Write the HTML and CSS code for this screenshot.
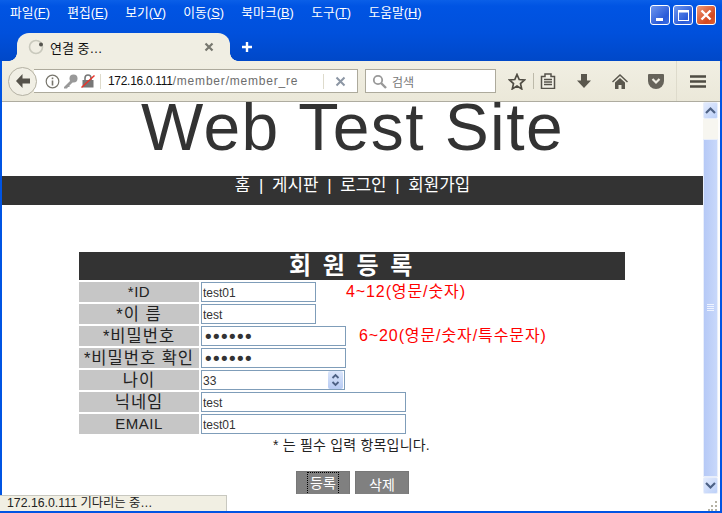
FILE: index.html
```html
<!DOCTYPE html>
<html lang="ko">
<head>
<meta charset="utf-8">
<title>연결 중…</title>
<link rel="stylesheet" href="styles.css">
</head>
<body>
<div class="window">
  <header class="titlebar">
    <nav class="menu">
      <span>파일(<u>F</u>)</span><span>편집(<u>E</u>)</span><span>보기(<u>V</u>)</span><span>이동(<u>S</u>)</span><span>북마크(<u>B</u>)</span><span>도구(<u>T</u>)</span><span>도움말(<u>H</u>)</span>
    </nav>
    <div class="winbtns">
      <div class="winbtn"><svg width="18" height="18" viewBox="0 0 18 18"><rect x="5" y="12" width="7" height="3" fill="#fff"/></svg></div>
      <div class="winbtn"><svg width="18" height="18" viewBox="0 0 18 18"><rect x="4.500" y="4.500" width="10" height="10" fill="none" stroke="#fff"/><rect x="4" y="4" width="11" height="2.500" fill="#fff"/></svg></div>
      <div class="winbtn close"><svg width="18" height="18" viewBox="0 0 18 18"><path d="M4.500 4.500l9 9M13.500 4.500l-9 9" stroke="#fff" stroke-width="2.400"/></svg></div>
    </div>
  </header>
  <div class="tabbar">
    <div class="tab">
      <svg class="spinner" width="16" height="16" viewBox="0 0 16 16"><circle cx="8" cy="8" r="6.500" fill="none" stroke="#c9c9bd" stroke-width="1.600"/><circle cx="13" cy="5.500" r="2" fill="#55554f"/></svg>
      <span class="tabtitle">연결 중…</span>
      <svg class="tabclose" width="10" height="10" viewBox="0 0 10 10"><path d="M1.500 1.500l7 7M8.500 1.500l-7 7" stroke="#77776f" stroke-width="2.200"/></svg>
    </div>
    <svg class="newtab" width="12" height="12" viewBox="0 0 12 12"><path d="M6 1v10M1 6h10" stroke="#fff" stroke-width="2.400"/></svg>
  </div>
  <div class="toolbar">
    <div class="back"><svg width="18" height="16" viewBox="0 0 18 16"><path d="M8.500 1L2 8l6.500 7V10.500H16v-5H8.500z" fill="#55524a"/></svg></div>
    <div class="urlbar">
      <svg class="ico-info" width="15" height="15" viewBox="0 0 15 15"><circle cx="7.500" cy="7.500" r="6.300" fill="none" stroke="#77756c" stroke-width="1.200"/><rect x="6.700" y="6.500" width="1.600" height="5" fill="#77756c"/><rect x="6.700" y="3.500" width="1.600" height="1.700" fill="#77756c"/></svg>
      <svg class="ico-key" width="15" height="15" viewBox="0 0 15 15"><circle cx="10.500" cy="4.500" r="4" fill="#999"/><path d="M8 6L1 13v1.500h3l1-1.500h1.500V11.500L10 8z" fill="#999"/></svg>
      <svg class="ico-lock" width="14" height="14" viewBox="0 0 14 14"><rect x="1.500" y="6" width="11" height="7.500" fill="#777"/><path d="M4 6.500V4a3 3 0 0 1 6 0v2.500" fill="none" stroke="#777" stroke-width="1.600"/><path d="M0.500 13.500L13.500 1.500" stroke="#e8352b" stroke-width="1.500"/></svg>
      <div class="sep"></div>
      <div class="url"><span class="host">172.16.0.111</span><span class="path">/member/member_re</span></div>
      <div class="sep right"></div>
      <svg class="urlclose" width="11" height="11" viewBox="0 0 11 11"><path d="M1.500 1.500l8 8M9.500 1.500l-8 8" stroke="#8c96a4" stroke-width="2"/></svg>
    </div>
    <div class="search">
      <svg width="15" height="15" viewBox="0 0 15 15"><circle cx="6" cy="6" r="4.200" fill="none" stroke="#999" stroke-width="1.800"/><path d="M9 9l5 5" stroke="#999" stroke-width="2.400"/></svg>
      <span>검색</span>
    </div>
    <div class="tools">
      <svg class="t-star" width="18" height="17" viewBox="0 0 18 17"><path d="M9 1.500l2.200 5 5.300.5-4 3.600 1.200 5.300L9 13.100 4.300 15.900l1.200-5.300-4-3.600 5.300-.5z" fill="none" stroke="#4f4c43" stroke-width="1.700"/></svg>
      <div class="tsep"></div>
      <svg class="t-clip" width="16" height="16" viewBox="0 0 16 16"><path d="M1.500 3.500h3.500V1h6v2.500h3.500v12H1.500z" fill="#f2f0e6" stroke="#55524a" stroke-width="1.500"/><path d="M4 6.500h8M4 9h8M4 11.500h8" stroke="#55524a" stroke-width="1.400"/></svg>
      <svg class="t-down" width="16" height="16" viewBox="0 0 16 16"><path d="M5 1h6v6.500h4L8 15 1 7.500h4z" fill="#5a574d"/></svg>
      <svg class="t-home" width="16" height="15" viewBox="0 0 16 15"><path d="M8 0L0 7.500l1 1L8 2l7 6.500 1-1z" fill="#5a574d"/><path d="M8 4L3 8.500V15h3.500v-4h3v4H13V8.500z" fill="#5a574d"/></svg>
      <svg class="t-pocket" width="16" height="15" viewBox="0 0 16 15"><path d="M1 0h14a1 1 0 0 1 1 1v6a8 8 0 0 1-16 0V1a1 1 0 0 1 1-1z" fill="#66635a"/><path d="M4.500 5L8 8.500 11.500 5" fill="none" stroke="#efede2" stroke-width="2.200"/></svg>
      <div class="tsep last"></div>
      <svg class="t-menu" width="16" height="13" viewBox="0 0 16 13"><path d="M0 1.500h16M0 6.500h16M0 11.500h16" stroke="#4f4c43" stroke-width="2.400"/></svg>
    </div>
  </div>
  <div class="viewport">
    <main class="page">
      <h1 class="site-title">Web Test Site</h1>
      <nav class="site-nav">홈 &nbsp;|&nbsp; 게시판 &nbsp;|&nbsp; 로그인 &nbsp;|&nbsp; 회원가입</nav>
      <form class="regform">
        <div class="formhead">회 원 등 록</div>
        <div class="row"><label class="lat">*ID</label><input class="w-id" value="test01"><span class="hint h1">4~12(영문/숫자)</span></div>
        <div class="row"><label>*이 름</label><input class="w-id" value="test"></div>
        <div class="row"><label>*비밀번호</label><input class="w-pw" type="password" value="123456"><span class="hint h2">6~20(영문/숫자/특수문자)</span></div>
        <div class="row"><label>*비밀번호 확인</label><input class="w-pw" type="password" value="123456"></div>
        <div class="row"><label>나이</label>
          <div class="numbox"><span>33</span>
            <div class="spin"><svg width="15" height="18" viewBox="0 0 15 18"><path d="M4.500 7L7.500 4l3 3" fill="none" stroke="#4d6185" stroke-width="1.800"/><path d="M4.500 11l3 3 3-3" fill="none" stroke="#4d6185" stroke-width="1.800"/></svg></div>
          </div>
        </div>
        <div class="row"><label>닉네임</label><input class="w-long" value="test"></div>
        <div class="row"><label class="lat">EMAIL</label><input class="w-long" value="test01"></div>
        <p class="note">* 는 필수 입력 항목입니다.</p>
        <div class="actions">
          <button type="button" class="btn focus"><span>등록</span></button>
          <button type="button" class="btn"><span>삭제</span></button>
        </div>
      </form>
    </main>
    <aside class="scrollbar">
      <div class="sb-btn"><svg width="13" height="9" viewBox="0 0 13 9"><path d="M2 7l4.500-4.500L11 7" fill="none" stroke="#4d6185" stroke-width="2.200"/></svg></div>
      <div class="sb-track">
        <div class="sb-thumb"><svg width="7" height="8" viewBox="0 0 7 8"><path d="M0 .5h7M0 2.500h7M0 4.500h7M0 6.500h7" stroke="#eef3ff"/></svg></div>
      </div>
      <div class="sb-btn"><svg width="13" height="9" viewBox="0 0 13 9"><path d="M2 2l4.500 4.500L11 2" fill="none" stroke="#4d6185" stroke-width="2.200"/></svg></div>
    </aside>
  </div>
  <footer class="statusbar">
    <div class="status">172.16.0.111 기다리는 중…</div>
    <svg class="grip" width="10" height="10" viewBox="0 0 10 10"><path d="M7 0h2v2H7zM7 4h2v2H7zM3 4h2v2H3zM7 8h2v2H7zM3 8h2v2H3zM0 8h2v2H0z" fill="#b5b2a4"/></svg>
  </footer>
</div>
</body>
</html>
```
FILE: styles.css
```css
* { box-sizing: border-box; }
html, body { margin: 0; padding: 0; height: 100%; overflow: hidden; }
body { font-family: "Liberation Sans", "Noto Sans CJK KR", sans-serif; }
.window {
  width: 722px; height: 513px; display: flex; flex-direction: column;
  background: #0054e3; padding: 0 2px 2px 2px;
}
.titlebar {
  height: 33px; margin: 0 -2px; padding: 5px 6px 0 10px;
  display: flex; justify-content: space-between; align-items: flex-start;
  background: linear-gradient(#0a5fe8 0, #0054e3 6px, #0050dc 100%);
}
.menu { display: flex; gap: 17.400px; color: #fff; font-size: 12.800px; line-height: 15px; }
.menu span { white-space: nowrap; }
.winbtns { display: flex; gap: 3px; }
.winbtn {
  width: 20px; height: 20px; border: 1px solid #fff; border-radius: 3px;
  background: linear-gradient(135deg, #6f97ee, #2a5bd8 70%, #3c6fe6);
}
.winbtn svg { display: block; }
.winbtn.close { background: linear-gradient(135deg, #ee9a78, #d5481f 70%, #e0622f); }

.tabbar {
  height: 28px; margin: 0 -2px; padding-left: 17px; display: flex; align-items: center;
  background: linear-gradient(#0050dc, #0048c8);
}
.tab {
  width: 213px; height: 28px; background: #f0eee3; border-radius: 12px 12px 0 0;
  display: flex; align-items: center; padding: 0 7px 0 11px; font-size: 13px; color: #111;
  position: relative;
}
.tab::before, .tab::after {
  content: ""; position: absolute; bottom: 0; width: 8px; height: 8px;
}
.tab::before { left: -8px; background: radial-gradient(circle at 0 0, transparent 7.500px, #f0eee3 8px); }
.tab::after { right: -8px; background: radial-gradient(circle at 100% 0, transparent 7.500px, #f0eee3 8px); }
.spinner { margin-right: 6px; }
.tabtitle { flex: 1; }
.tabclose { margin-right: 9px; }
.newtab { margin-left: 11px; }

.toolbar {
  height: 41px; background: linear-gradient(#f1efe3, #ebe8d9);
  border-bottom: 1px solid #aeaca0; display: flex; align-items: center; padding: 0 0 0 6px;
}
.back {
  width: 29px; height: 29px; border-radius: 50%; border: 1px solid #b4b1a3;
  background: #f1efe5; display: flex; align-items: center; justify-content: center;
  position: relative; z-index: 1; flex: none;
}
.urlbar {
  width: 324px; height: 24px; margin-left: -3px; padding-left: 11px;
  background: #fff; border: 1px solid #adaa9c; border-left: 0;
  display: flex; align-items: center; flex: none;
}
.ico-info { margin-right: 3px; }
.ico-key { margin-right: 3px; }
.sep { width: 1px; height: 15px; background: #dedbcc; margin-left: 5px; }
.url {
  width: 190px; overflow: hidden; white-space: nowrap; font-size: 12px; margin-left: 7px;
}
.host { color: #111; letter-spacing: -.3px; }
.path { color: #6d6d6d; letter-spacing: .8px; }
.sep.right { margin-left: 25px; }
.urlclose { margin-left: 11px; }
.search {
  width: 131px; height: 24px; margin-left: 7px; background: #fff; border: 1px solid #adaa9c;
  display: flex; align-items: center; gap: 5px; padding-left: 6px; font-size: 12px; color: #777; flex: none;
}
.tools { display: flex; align-items: center; flex: 1; height: 100%; }
.t-star { margin-left: 12px; }
.tsep { width: 1px; height: 16px; background: #bdbaaa; margin-left: 7px; }
.t-clip { margin-left: 6px; }
.t-down { margin-left: 20px; }
.t-home { margin-left: 20px; }
.t-pocket { margin-left: 20px; }
.tsep.last { height: 40px; background: #dedbcc; margin-left: 12px; }
.t-menu { margin-left: 13px; }

.viewport { flex: 1; min-height: 0; display: flex; background: #fff; }
.page { flex: 1; min-width: 0; background: #fff; }
.site-title {
  margin: 0; height: 74px; font-size: 66px; line-height: 50px; font-weight: 400;
  letter-spacing: 1.400px; text-align: center; color: #333; white-space: nowrap;
}
.site-nav {
  height: 29px; background: #333; color: #fff; font-size: 16.800px; line-height: 20px;
  word-spacing: -.3px; text-align: center;
}
.regform { margin: 47px 0 0 77px; width: 546px; }
.formhead {
  height: 28px; background: #333; color: #fff;
  font-size: 24px; line-height: 28px; font-weight: 700; text-align: center; letter-spacing: 2.500px;
  margin-bottom: 2px;
}
.row { height: 20px; margin-bottom: 2px; display: flex; align-items: stretch; }
.row label {
  width: 120px; margin-right: 2px; background: #c6c6c6; color: #222; text-align: center;
  font-size: 16.500px; line-height: 20px; white-space: nowrap; flex: none; letter-spacing: 1px;
}
.row label.lat { font-size: 15px; letter-spacing: .5px; }
.row input, .numbox {
  height: 20px; border: 1px solid #7f9db9; padding: 2px 1px 0; font-size: 12px; color: #333;
  font-family: "Liberation Sans", sans-serif; background: #fff; outline: none; flex: none;
}
.w-id { width: 115px; }
.row input.w-pw {
  width: 145px; font-family: "DejaVu Sans", sans-serif; font-size: 18px; letter-spacing: -2.600px; padding-top: 0;
}
.w-long { width: 205px; }
.numbox { width: 144px; display: flex; align-items: center; justify-content: space-between; }
.row .numbox { padding: 0 1px; }
.numbox span { padding-top: 2px; }
.spin {
  width: 15px; height: 18px; background: linear-gradient(#dbe6fb, #b7cbf3); border-radius: 2px;
}
.spin svg { display: block; }
.hint { color: #f00; font-size: 16px; line-height: 20px; white-space: nowrap; letter-spacing: .9px; }
.h1 { margin-left: 30px; }
.h2 { margin-left: 13px; }
.note { margin: 2px 0 0; padding-left: 194px; font-size: 14px; line-height: 18px; letter-spacing: .2px; color: #222; white-space: nowrap; }
.actions { margin-top: 17px; padding-left: 217px; display: flex; gap: 5px; }
.btn {
  width: 54px; height: 25px; background: #808080; border: 1px solid #777; color: #fff;
  padding: 0; font-size: 14px; font-family: inherit; display: flex; align-items: center; justify-content: center;
}
.btn.focus span { outline: 1px dotted #000; padding: 1px 2px; line-height: 19px; }

.scrollbar {
  width: 17px; display: flex; flex-direction: column; background: #fdfdfd; flex: none; padding-right: 2px;
}
.sb-btn {
  height: 17px; background: linear-gradient(135deg, #e3ebfd, #bcd0f8); border: 1px solid #e8eefb; border-radius: 2px;
  display: flex; align-items: center; justify-content: center;
}
.sb-track { flex: 1; padding-top: 20px; display: flex; background: #f7f6f0; }
.sb-thumb {
  flex: 1; background: linear-gradient(90deg, #b6c9f6, #c8d8fb); border: 1px solid #e8eefb;
  display: flex; align-items: center; justify-content: center;
}
.statusbar {
  height: 17px; background: #fff; position: relative; display: flex; justify-content: flex-end; align-items: flex-end;
}
.status {
  position: absolute; left: -2px; bottom: 0; width: 227px; height: 16px; padding-left: 7px;
  background: #f1efe3; border: 1px solid #c8c8c0; border-left: 0; border-bottom: 0;
  font-size: 12.300px; line-height: 15px; color: #222; white-space: nowrap;
}
.grip { margin-right: 2px; }
```
